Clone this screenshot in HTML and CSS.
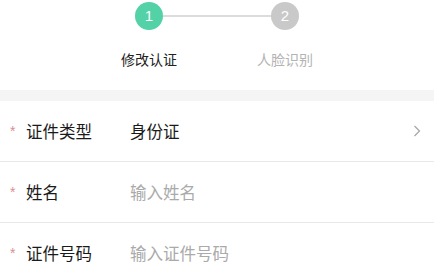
FILE: index.html
```html
<!DOCTYPE html>
<html>
<head>
<meta charset="utf-8">
<link rel="stylesheet" href="styles.css">
</head>
<body>
<div class="steps">
  <div class="step">
    <div class="dot active">1</div>
    <div class="step-label active">修改认证</div>
  </div>
  <div class="line"></div>
  <div class="step">
    <div class="dot">2</div>
    <div class="step-label">人脸识别</div>
  </div>
</div>
<div class="band"></div>
<div class="form">
  <div class="row">
    <span class="star">*</span>
    <span class="label">证件类型</span>
    <span class="value">身份证</span>
    <svg class="chev" width="8" height="12" viewBox="0 0 8 12"><path d="M1.5 1 L6.5 6 L1.5 11" fill="none" stroke="#a8a8a8" stroke-width="1.3"/></svg>
  </div>
  <div class="row">
    <span class="star">*</span>
    <span class="label">姓名</span>
    <span class="value ph">输入姓名</span>
  </div>
  <div class="row">
    <span class="star">*</span>
    <span class="label">证件号码</span>
    <span class="value ph">输入证件号码</span>
  </div>
</div>
</body>
</html>
```
FILE: styles.css
```css
html, body {
  margin: 0;
  padding: 0;
  background: #fff;
  font-family: "Noto Sans CJK SC", "Noto Sans", sans-serif;
}
.steps {
  height: 90px;
  display: flex;
  justify-content: center;
  align-items: flex-start;
}
.step {
  width: 80px;
  display: flex;
  flex-direction: column;
  align-items: center;
}
.dot {
  margin-top: 2px;
  width: 28px;
  height: 28px;
  border-radius: 50%;
  background: #c9c9c9;
  color: #fff;
  font-size: 15px;
  line-height: 28px;
  text-align: center;
  font-family: "Liberation Sans", sans-serif;
}
.dot.active {
  background: #53d1a7;
}
.step-label {
  margin-top: 18px;
  font-size: 14px;
  line-height: 22px;
  color: #b3b3b3;
}
.step-label.active {
  color: #222;
}
.line {
  width: 108px;
  height: 2px;
  background: #dcdcdc;
  margin: 15px -26px 0;
}
.band {
  height: 11px;
  background: #f5f5f5;
}
.row {
  height: 60px;
  display: flex;
  align-items: center;
  border-bottom: 1px solid #e8e8e8;
}
.star {
  width: 26px;
  padding-left: 10px;
  box-sizing: border-box;
  color: #d98f8f;
  font-size: 14px;
  font-family: "Liberation Sans", sans-serif;
}
.label {
  width: 104px;
  font-size: 16.5px;
  color: #1a1a1a;
}
.value {
  flex: 1;
  font-size: 16.5px;
  color: #1a1a1a;
}
.value.ph {
  color: #aaaaaa;
}
.chev {
  margin-right: 13px;
}
```
